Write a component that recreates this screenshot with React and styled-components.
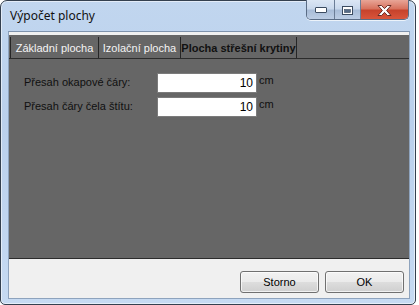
import styled, { createGlobalStyle } from "styled-components";

const GlobalStyle = createGlobalStyle`
  html, body {
    margin: 0;
    padding: 0;
    background: #ffffff;
  }
  * {
    box-sizing: border-box;
  }
`;

const tabs = ["Základní plocha", "Izolační plocha", "Plocha střešní krytiny"];
const tabWidths = [88, 82, 117];

const fields = [
  { label: "Přesah okapové čáry:", value: "10" },
  { label: "Přesah čáry čela štítu:", value: "10" },
];

function MinimizeGlyph() {
  return (
    <svg width="12" height="6" viewBox="0 0 12 6">
      <rect x="0.5" y="0.5" width="11" height="5" rx="0.5" fill="#fff" stroke="#3b4b60" />
    </svg>
  );
}

function MaximizeGlyph() {
  return (
    <svg width="11" height="9" viewBox="0 0 11 9">
      <rect x="0.5" y="0.5" width="10" height="8" fill="#fff" stroke="#3b4b60" />
      <rect x="2.5" y="3.5" width="6" height="3" fill="#566b86" stroke="#3b4b60" strokeWidth="0.6" />
    </svg>
  );
}

function CloseGlyph() {
  return (
    <svg width="15" height="11" viewBox="0 0 15 11">
      <path
        d="M1 0.5h3.5L7.5 3.6 10.5 0.5H14L9.6 5.5 14 10.5h-3.5L7.5 7.4 4.5 10.5H1l4.4-5z"
        fill="#fff"
        stroke="#5a1d17"
        strokeWidth="0.9"
        strokeLinejoin="round"
      />
    </svg>
  );
}

export default function App() {
  return (
    <>
      <GlobalStyle />
      <Window>
        <TitleBar>
          <Caption>Výpočet plochy</Caption>
          <CaptionButtons>
            <CaptionButton $w={28}>
              <MinimizeGlyph />
            </CaptionButton>
            <CaptionButton $w={26}>
              <MaximizeGlyph />
            </CaptionButton>
            <CloseButton>
              <CloseGlyph />
            </CloseButton>
          </CaptionButtons>
        </TitleBar>
        <Client>
          <TabControl>
            <TabStrip>
              {tabs.map((t, i) => (
                <Tab key={t} $w={tabWidths[i]} $active={i === 2} $last={i === tabs.length - 1}>
                  {t}
                </Tab>
              ))}
            </TabStrip>
            <TabPage>
              <FieldGrid>
                {fields.map((f) => (
                  <Row key={f.label}>
                    <Label>{f.label}</Label>
                    <NumberBox>{f.value}</NumberBox>
                    <Unit>cm</Unit>
                  </Row>
                ))}
              </FieldGrid>
            </TabPage>
          </TabControl>
          <ButtonBar>
            <Button>Storno</Button>
            <Button>OK</Button>
          </ButtonBar>
        </Client>
      </Window>
    </>
  );
}

const Window = styled.div`
  width: 416px;
  height: 305px;
  display: flex;
  flex-direction: column;
  padding: 0 5px 5px 7px;
  border: 1px solid #34404f;
  border-radius: 7px 7px 5px 5px;
  background: linear-gradient(180deg, #c1d6ef 0%, #bad0ec 40%, #c6daf2 100%);
  box-shadow: inset 0 0 0 1px rgba(255, 255, 255, 0.55);
`;

const TitleBar = styled.div`
  height: 30px;
  display: flex;
  align-items: flex-start;
  flex-shrink: 0;
`;

const Caption = styled.div`
  padding: 7px 0 0 2px;
  font-family: "Noto Sans", "DejaVu Sans", sans-serif;
  font-size: 12px;
  line-height: 16px;
  color: #111;
`;

const CaptionButtons = styled.div`
  display: flex;
  margin: -1px 1px 0 auto;
  height: 20px;
  border: 1px solid #5a6c85;
  border-top: none;
  border-radius: 0 0 5px 5px;
  overflow: hidden;
  box-shadow: 0 1px 0 rgba(255, 255, 255, 0.7);
`;

const CaptionButton = styled.div`
  width: ${(p) => p.$w}px;
  display: flex;
  align-items: center;
  justify-content: center;
  padding-top: 1px;
  background: linear-gradient(180deg, #dbe6f4 0%, #c9d8ec 45%, #a9bdd8 55%, #bccde4 100%);
  border-right: 1px solid #6b7d96;
`;

const CloseButton = styled.div`
  width: 47px;
  display: flex;
  align-items: center;
  justify-content: center;
  padding-top: 1px;
  background: linear-gradient(180deg, #e8a597 0%, #d8735f 45%, #c7432c 55%, #d9553b 100%);
`;

const Client = styled.div`
  flex: 1;
  display: flex;
  flex-direction: column;
  background: #f0f0f0;
  border: 1px solid #8ea3bd;
  border-top-color: #7f93ad;
`;

const TabControl = styled.div`
  margin-top: 3px;
  height: 224px;
  display: flex;
  flex-direction: column;
  background: #666666;
  border-bottom: 1px solid #2c2c2c;
`;

const TabStrip = styled.div`
  display: flex;
  padding: 2px 0 0 1px;
  height: 24px;
  border-bottom: 1px solid #2c2c2c;
`;

const Tab = styled.div`
  width: ${(p) => p.$w}px;
  height: 21px;
  display: flex;
  align-items: center;
  justify-content: center;
  padding-top: 1px;
  border-left: 1px solid #262626;
  border-right: ${(p) => (p.$last ? "1px solid #262626" : "none")};
  font-family: "Liberation Sans", Arial, sans-serif;
  font-size: 11px;
  font-weight: ${(p) => (p.$active ? 700 : 400)};
  color: ${(p) => (p.$active ? "#111" : "#f4f4f4")};
  white-space: nowrap;
`;

const TabPage = styled.div`
  flex: 1;
  padding: 14px 0 0 15px;
`;

const FieldGrid = styled.div`
  display: flex;
  flex-direction: column;
  gap: 4px;
`;

const Row = styled.div`
  display: flex;
  align-items: flex-start;
  font-family: "Liberation Sans", Arial, sans-serif;
  font-size: 11px;
`;

const Label = styled.div`
  width: 133px;
  line-height: 14px;
  padding-top: 2px;
  color: #101010;
`;

const NumberBox = styled.div`
  width: 100px;
  height: 20px;
  background: #fff;
  border: 1px solid #7b7b7b;
  padding: 0 3px 0 0;
  text-align: right;
  font-size: 12px;
  line-height: 19px;
  color: #000;
`;

const Unit = styled.div`
  margin-left: 2px;
  padding-top: 1px;
  line-height: 13px;
  color: #101010;
`;

const ButtonBar = styled.div`
  flex: 1;
  display: flex;
  justify-content: flex-end;
  align-items: flex-start;
  gap: 6px;
  padding: 12px 5px 0 0;
`;

const Button = styled.div`
  width: 79px;
  height: 22px;
  display: flex;
  align-items: center;
  justify-content: center;
  border: 1px solid #707070;
  border-radius: 3px;
  background: linear-gradient(180deg, #f2f2f2 0%, #ebebeb 48%, #dddddd 52%, #cfcfcf 100%);
  box-shadow: inset 0 0 0 1px rgba(255, 255, 255, 0.7);
  font-family: "Liberation Sans", Arial, sans-serif;
  font-size: 11px;
  color: #000;
`;
